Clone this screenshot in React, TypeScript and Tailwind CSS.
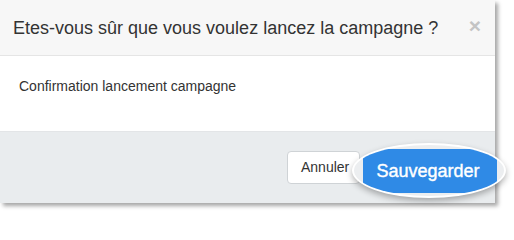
export default function App() {
  return (
    <div className="w-[514px] h-[213px] bg-white overflow-hidden font-['Liberation_Sans',Arial,sans-serif]">
      <div className="w-[495px] h-[203px] flex flex-col bg-white shadow-[3px_3px_4px_rgba(0,0,0,0.35)]">
        {/* Header */}
        <div className="h-[56px] flex items-center justify-between bg-[#f7f7f7] border-b border-[#e5e5e5] pl-[13px] pr-[14px]">
          <h4 className="text-[18px] text-[#333] leading-none">Etes-vous sûr que vous voulez lancez la campagne ?</h4>
          <span className="text-[21px] font-bold text-[#c4c4c4] leading-none -mt-[4px]">×</span>
        </div>

        {/* Body */}
        <div className="h-[75px] pl-[19px] pt-[22px]">
          <p className="text-[14px] leading-[16px] text-[#333]">Confirmation lancement campagne</p>
        </div>

        {/* Footer */}
        <div className="relative flex-1 flex items-center justify-end bg-[#e9ecee] border-t border-[#e3e5e7]">
          <button className="h-[33px] w-[73px] mr-[135px] bg-white border border-[#cfd3d6] rounded-[4px] text-[14px] text-[#333] text-left pl-[13px]">
            Annuler
          </button>

          {/* magnified save button */}
          <div className="absolute left-[352px] top-[11px] w-[154px] h-[55px] rounded-[50%] border-2 border-white bg-[#eceef0] overflow-hidden shadow-[0_3px_6px_rgba(0,0,0,0.3)]">
            <div className="absolute left-[9px] top-[4px] w-[134px] h-[44px] rounded-[6px] bg-[#2f8ae6] flex items-center justify-center">
              <span className="text-[18px] text-white pr-[4px] [-webkit-text-stroke:0.4px_white]">Sauvegarder</span>
            </div>
          </div>
        </div>
      </div>
    </div>
  );
}
